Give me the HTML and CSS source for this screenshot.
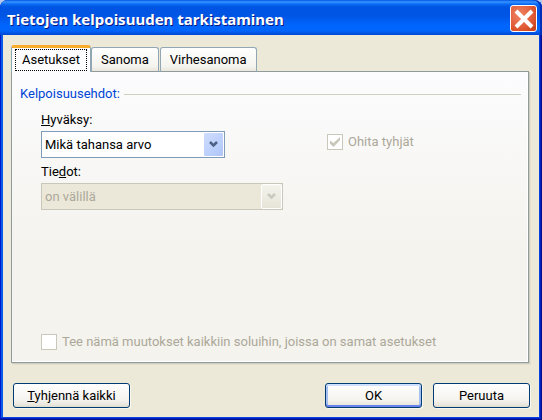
FILE: index.html
```html
<!DOCTYPE html>
<html lang="fi">
<head>
  <meta charset="UTF-8" />
  <meta name="viewport" content="width=device-width, initial-scale=1" />
  <title>Tietojen kelpoisuuden tarkistaminen</title>
  <link rel="stylesheet" href="styles.css">
</head>
<body>
  <div class="window">
    <header class="titlebar">
      <h1>Tietojen kelpoisuuden tarkistaminen</h1>
      <button class="close" type="button" aria-label="Sulje">
        <svg width="20" height="20" viewBox="0 0 20 20"><path d="M2 2 L18 18 M18 2 L2 18" stroke="#fff" stroke-width="4" fill="none" /></svg>
      </button>
    </header>
    <form class="content">
      <div class="tabs" role="tablist">
        <button class="tab active" type="button" role="tab" aria-selected="true"><span>Asetukset</span></button>
        <button class="tab" type="button" role="tab"><span>Sanoma</span></button>
        <button class="tab" type="button" role="tab"><span>Virhesanoma</span></button>
      </div>
      <section class="panel" role="tabpanel">
        <h2>Kelpoisuusehdot:</h2>
        <div class="fields">
          <div class="row">
            <div class="field">
              <label for="allow"><u>H</u>yväksy:</label>
              <div class="combo">
                <select id="allow">
                  <option>Mikä tahansa arvo</option>
                </select>
                <span class="arrow"><svg width="9" height="7" viewBox="0 0 9 7"><path d="M1 1 L4.500 4.500 L8 1" /></svg></span>
              </div>
            </div>
            <label class="check"><input type="checkbox" checked disabled>Ohita tyhjät</label>
          </div>
          <div class="field wide">
            <label for="data">Tie<u>d</u>ot:</label>
            <div class="combo">
              <select id="data" disabled>
                <option>on välillä</option>
              </select>
              <span class="arrow"><svg width="9" height="7" viewBox="0 0 9 7"><path d="M1 1 L4.500 4.500 L8 1" /></svg></span>
            </div>
          </div>
        </div>
        <label class="check apply"><input type="checkbox" disabled>Tee nämä muutokset kaikkiin soluihin, joissa on samat asetukset</label>
      </section>
      <footer class="actions">
        <button class="btn clear" type="button"><u>T</u>yhjennä kaikki</button>
        <button class="btn default" type="submit">OK</button>
        <button class="btn" type="button">Peruuta</button>
      </footer>
    </form>
  </div>
</body>
</html>
```

FILE: styles.css
```css
* {
  margin: 0; padding: 0; box-sizing: border-box;
}
body {
  background: #b4c8ec;
  font-family: Roboto, Tahoma, sans-serif;
  font-size: 13px;
  line-height: 16px;
  color: #000;
}
button, select {
  font: inherit;
  color: inherit;
}
.window {
  min-height: 100vh;
  display: flex;
  flex-direction: column;
  padding: 0 3px 3px;
  background: #ece9d8;
  border-radius: 8px 8px 0 0;
  box-shadow: inset -1px -1px #00138c, inset 1px 0 #0019cf, inset -2px -2px #001dbe, inset -3px -3px #0a3fe0, inset 3px 0 #0a5ae8;
}
.titlebar {
  height: 35px;
  margin: 0 -3px;
  padding: 5px 5px 3px 7px;
  display: flex;
  align-items: center;
  justify-content: space-between;
  border-radius: 8px 8px 0 0;
  background: linear-gradient(#0058e6 0, #3a93ff 2px, #0a6cf5 4px, #0054e3 7px, #0055e5 16px, #0066ff 26px, #0064fa 31px, #0046d0 35px);
  box-shadow: inset -2px 0 #0030b8;
}
.titlebar h1 {
  font-family: "Noto Sans", sans-serif;
  font-size: 15px;
  line-height: 20px;
  font-weight: 700;
  color: #fff;
  text-shadow: 1px 1px #0a1883;
}
.close {
  width: 27px;
  height: 27px;
  display: flex;
  align-items: center;
  justify-content: center;
  border: 1px solid #fff;
  border-radius: 3px;
  background: radial-gradient(circle at 35% 35%, #ee8465, #e05a35 60%, #c43a10);
}
.content {
  flex: 1;
  display: flex;
  flex-direction: column;
  padding: 10px 9px 9px 8px;
}
.tabs {
  display: flex;
  align-items: flex-end;
  position: relative;
  margin-bottom: -1px;
}
.tab {
  height: 25px;
  padding: 0 9px;
  margin-right: 1px;
  border: 1px solid #91a7b4;
  border-bottom-color: #919b9c;
  border-radius: 3px 3px 0 0;
  background: linear-gradient(#fff, #f4f3ee 80%, #e8e6dc);
}
.tab.active {
  height: 27px;
  margin-right: 0;
  padding: 0 3px;
  border-color: #f8ac2c #91a7b4;
  border-top-width: 3px;
  border-bottom: 0;
  background: #fcfcfe;
}
.tab.active span {
  display: block;
  padding: 2px 6px;
  border: 1px dotted #000;
}
.panel {
  flex: 1;
  display: flex;
  flex-direction: column;
  margin-right: 1px;
  padding: 14px 7px 12px 8px;
  border: 1px solid #919b9c;
  background: linear-gradient(#fcfcfe, #f4f3ee 60%, #f4f3ee);
  box-shadow: inset -1px -1px #fff, 1px 1px #d0cebf, 2px 2px #e2dfd0;
}
.panel h2 {
  display: flex;
  align-items: center;
  gap: 4px;
  font-size: 13px;
  font-weight: 400;
  color: #0046d5;
}
.panel h2::after {
  content: "";
  flex: 1;
  height: 1px;
  background: #d0d0bf;
}
.fields {
  padding: 10px 20px 0 21px;
}
.row {
  display: flex;
  gap: 102px;
  align-items: flex-end;
}
.row .check {
  padding-bottom: 8px;
}
.field {
  width: 184px;
}
.field.wide {
  width: 242px;
  margin-top: 6px;
}
.field label {
  display: block;
  margin-bottom: 3px;
}
.combo {
  position: relative;
}
.combo select {
  appearance: none;
  display: block;
  width: 100%;
  height: 27px;
  padding: 0 24px 0 3px;
  border: 1px solid #7f9db9;
  border-radius: 0;
  background: #fff;
}
.combo select:disabled {
  border-color: #c9c7ba;
  background: #ebe8d9;
  color: #aca899;
  opacity: 1;
}
.arrow {
  position: absolute;
  top: 1px;
  right: 1px;
  bottom: 1px;
  width: 21px;
  display: flex;
  align-items: center;
  justify-content: center;
  border: 1px solid #fff;
  border-radius: 2px;
  background: linear-gradient(135deg, #cfdcfc, #bcd0fc 60%, #adc4f7);
  pointer-events: none;
}
.arrow path {
  fill: none;
  stroke: #4d6185;
  stroke-width: 2.5;
}
select:disabled + .arrow {
  background: linear-gradient(#f4f3ec, #e6e4d9);
}
select:disabled + .arrow path {
  stroke: #c9c9be;
}
.check {
  display: flex;
  align-items: center;
  gap: 5px;
  color: #aca899;
}
.check input {
  appearance: none;
  width: 16px;
  height: 16px;
  flex: none;
  display: grid;
  place-items: center;
  border: 1px solid #cac8bb;
  background: #fff;
}
.check input:checked::before {
  content: "";
  width: 10px;
  height: 10px;
  background: #cac8bb;
  clip-path: polygon(0 35%, 35% 60%, 100% 0, 100% 32%, 35% 100%, 0 68%);
}
.apply {
  margin-top: auto;
  padding-left: 21px;
}
.actions {
  display: flex;
  gap: 11px;
  padding: 20px 0 0 2px;
}
.btn {
  width: 97px;
  height: 25px;
  border: 1px solid #003c74;
  border-radius: 3px;
  background: linear-gradient(#fff, #f4f3ee 70%, #e9e7de 90%, #dfdccf);
  box-shadow: 1px 1px #f8f7f0;
}
.btn.clear {
  width: 117px;
  margin-right: auto;
}
.btn.default {
  box-shadow: inset 0 2px #cee0ff, inset 0 -2px #6982ee, inset 2px 0 #a4bff0, inset -2px 0 #a4bff0, 1px 1px #f8f7f0;
}
```
